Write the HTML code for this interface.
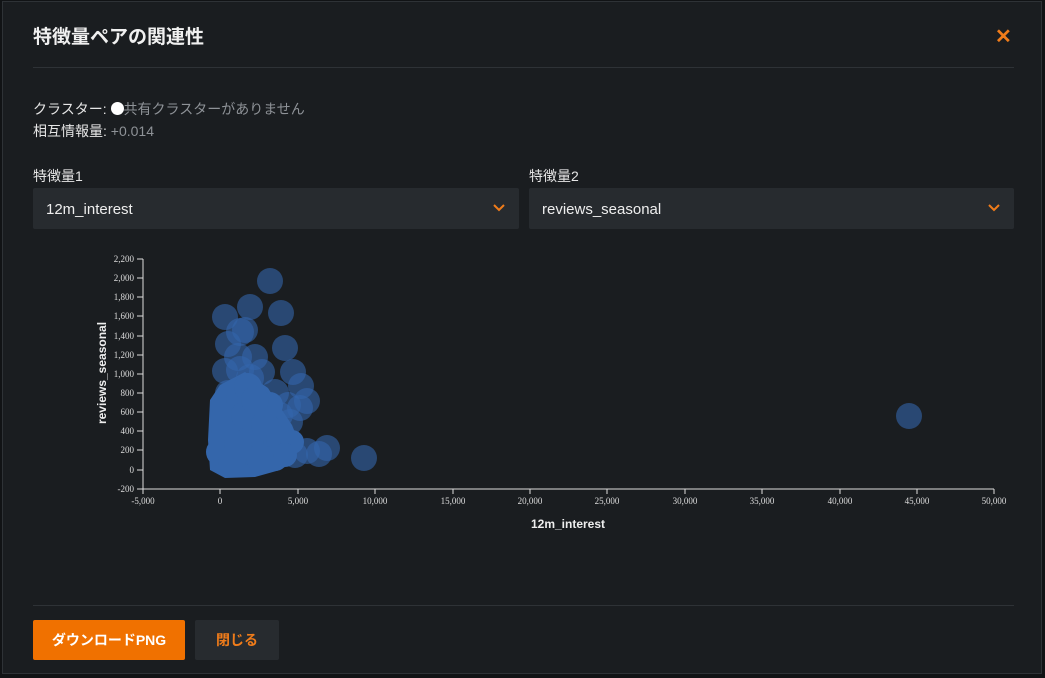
<!DOCTYPE html>
<html><head><meta charset="utf-8"><style>
*{box-sizing:border-box;margin:0;padding:0}
body{width:1045px;height:678px;background:#111315;font-family:"Liberation Sans","Noto Sans CJK JP",sans-serif;color:#e8e8e8;overflow:hidden;position:relative}
.modal{position:absolute;left:2px;top:1px;width:1040px;height:673px;background:#1a1d20;border:1px solid #2e3236}
.t{position:absolute;left:33px;top:22px;font-size:19px;font-weight:bold;color:#f0f0f0}
.x{position:absolute;left:995px;top:24px;color:#f07c1a;font-size:20px;font-weight:bold}
.hr{position:absolute;left:33px;width:981px;height:1px;background:#2e3236}
.l{position:absolute;font-size:14px;color:#e6e6e6}
.g{color:#8e9297}
.sel{position:absolute;top:188px;height:41px;background:#272b2f;border-radius:2px;font-size:15px;color:#eee;padding:13px 0 0 13px}
.sel svg{position:absolute;right:14px;top:16px}
.btn{position:absolute;top:620px;height:40px;border-radius:2px;font-size:14px;font-weight:bold;text-align:center;line-height:40px}
</style></head><body>
<div class="modal"></div>
<div class="t">特徴量ペアの関連性</div>
<div class="x">✕</div>
<div class="hr" style="top:67px"></div>
<div class="l" style="left:33px;top:99px">クラスター: <span style="display:inline-block;width:13px;height:13px;border-radius:50%;background:#fff;vertical-align:-1px"></span><span class="g">共有クラスターがありません</span></div>
<div class="l" style="left:33px;top:121px">相互情報量: <span class="g">+0.014</span></div>
<div class="l" style="left:33px;top:166px">特徴量1</div>
<div class="l" style="left:529px;top:166px">特徴量2</div>
<div class="sel" style="left:33px;width:486px">12m_interest<svg width="12" height="8"><path d="M1 1l5 5 5-5" stroke="#f07c1a" stroke-width="2" fill="none"/></svg></div>
<div class="sel" style="left:529px;width:485px">reviews_seasonal<svg width="12" height="8"><path d="M1 1l5 5 5-5" stroke="#f07c1a" stroke-width="2" fill="none"/></svg></div>
<svg style="position:absolute;left:0;top:0" width="1045" height="678" font-family="Liberation Serif,serif" font-size="9" fill="#ddd">
<g fill="#3466ab" fill-opacity="0.6">
<circle cx="270" cy="281" r="13"/><circle cx="250" cy="307" r="13"/><circle cx="281" cy="313" r="13"/><circle cx="225" cy="317" r="13"/><circle cx="285" cy="348" r="13"/><circle cx="293" cy="372" r="13"/><circle cx="301" cy="386" r="13"/><circle cx="307" cy="401" r="13"/><circle cx="364" cy="458" r="13"/><circle cx="909" cy="416" r="13"/><circle cx="319" cy="454" r="13"/><circle cx="327" cy="448" r="13"/><circle cx="307" cy="451" r="13"/><circle cx="295" cy="455" r="13"/><circle cx="240" cy="332" r="14"/><circle cx="245" cy="330" r="13"/><circle cx="228" cy="344" r="13"/><circle cx="238" cy="357" r="14"/><circle cx="255" cy="357" r="13"/><circle cx="225" cy="371" r="13"/><circle cx="262" cy="372" r="13"/><circle cx="228" cy="393" r="13"/><circle cx="275" cy="393" r="14"/><circle cx="288" cy="405" r="13"/><circle cx="280" cy="415" r="13"/><circle cx="300" cy="408" r="13"/><circle cx="290" cy="422" r="13"/><circle cx="240" cy="370" r="14"/><circle cx="250" cy="378" r="14"/>
</g>
<g fill="#3466ab">
<path d="M208 440 L210 400 L220 385 L245 372 L268 388 L282 410 L292 425 L298 440 L296 460 L280 470 L255 477 L225 478 L210 470 Z"/>
<circle cx="225" cy="410" r="13"/><circle cx="225" cy="430" r="14"/><circle cx="220" cy="452" r="14"/><circle cx="232" cy="462" r="14"/><circle cx="240" cy="400" r="14"/><circle cx="248" cy="387" r="14"/><circle cx="245" cy="415" r="14"/><circle cx="250" cy="440" r="14"/><circle cx="260" cy="458" r="14"/><circle cx="265" cy="425" r="14"/><circle cx="270" cy="405" r="13"/><circle cx="280" cy="440" r="14"/><circle cx="275" cy="458" r="13"/><circle cx="292" cy="442" r="12"/><circle cx="238" cy="445" r="14"/><circle cx="255" cy="400" r="14"/><circle cx="285" cy="455" r="12"/>
</g>
<g stroke="#ddd" stroke-width="1" fill="none"><path d="M143 259V489H994"/>
<path d="M137 259h6M137 278h6M137 297h6M137 316h6M137 336h6M137 355h6M137 374h6M137 393h6M137 412h6M137 431h6M137 450h6M137 470h6M137 489h6"/>
<path d="M143 489v5M220 489v5M298 489v5M375 489v5M453 489v5M530 489v5M607 489v5M685 489v5M762 489v5M840 489v5M917 489v5M994 489v5"/></g>
<g text-anchor="end"><text x="134" y="262">2,200</text><text x="134" y="281">2,000</text><text x="134" y="300">1,800</text><text x="134" y="319">1,600</text><text x="134" y="339">1,400</text><text x="134" y="358">1,200</text><text x="134" y="377">1,000</text><text x="134" y="396">800</text><text x="134" y="415">600</text><text x="134" y="434">400</text><text x="134" y="453">200</text><text x="134" y="473">0</text><text x="134" y="492">-200</text></g>
<g text-anchor="middle"><text x="143" y="504">-5,000</text><text x="220" y="504">0</text><text x="298" y="504">5,000</text><text x="375" y="504">10,000</text><text x="453" y="504">15,000</text><text x="530" y="504">20,000</text><text x="607" y="504">25,000</text><text x="685" y="504">30,000</text><text x="762" y="504">35,000</text><text x="840" y="504">40,000</text><text x="917" y="504">45,000</text><text x="994" y="504">50,000</text></g>
<text x="568" y="528" text-anchor="middle" font-family="Liberation Sans,sans-serif" font-size="12" font-weight="bold" fill="#eee">12m_interest</text>
<text transform="translate(106 373) rotate(-90)" text-anchor="middle" font-family="Liberation Sans,sans-serif" font-size="12" font-weight="bold" fill="#eee">reviews_seasonal</text>
</svg>
<div class="hr" style="top:605px"></div>
<div class="btn" style="left:33px;width:152px;background:#f07100;color:#fff">ダウンロードPNG</div>
<div class="btn" style="left:195px;width:84px;background:#272b2f;color:#f07c1a">閉じる</div>
</body></html>
